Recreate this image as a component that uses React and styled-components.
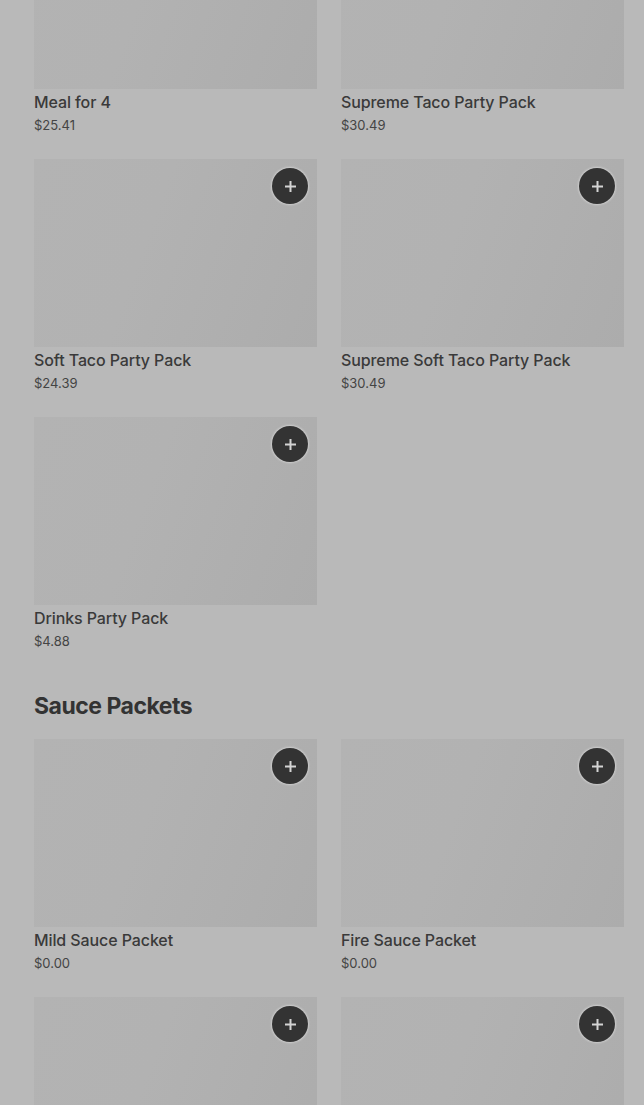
import styled, { createGlobalStyle } from "styled-components";

const GlobalStyle = createGlobalStyle`
    body {
        margin: 0;
        background: #b9b9b9;
        font-family: 'Inter', 'Liberation Sans', sans-serif;
        overflow: hidden;
    }
`;

const sections = [
    {
        title: null,
        items: [
            { name: "Meal for 4", price: "$25.41" },
            { name: "Supreme Taco Party Pack", price: "$30.49" },
            { name: "Soft Taco Party Pack", price: "$24.39" },
            { name: "Supreme Soft Taco Party Pack", price: "$30.49" },
            { name: "Drinks Party Pack", price: "$4.88" },
        ],
    },
    {
        title: "Sauce Packets",
        items: [
            { name: "Mild Sauce Packet", price: "$0.00" },
            { name: "Fire Sauce Packet", price: "$0.00" },
            { name: "Hot Sauce Packet", price: "$0.00" },
            { name: "Diablo Sauce Packet", price: "$0.00" },
        ],
    },
];

function PlusIcon() {
    return (
        <svg width="13" height="13" viewBox="0 0 13 13">
            <path d="M6.5 1v11M1 6.5h11" stroke="#d4d4d4" strokeWidth="2" />
        </svg>
    );
}

function ItemCard({ name, price }) {
    return (
        <Card>
            <Thumb>
                <AddButton aria-label="Add">
                    <PlusIcon />
                </AddButton>
            </Thumb>
            <ItemName>{name}</ItemName>
            <ItemPrice>{price}</ItemPrice>
        </Card>
    );
}

export default function App() {
    return (
        <>
            <GlobalStyle />
            <Page>
                {sections.map((section, index) => (
                    <Section key={index}>
                        {section.title && <SectionTitle>{section.title}</SectionTitle>}
                        <Grid>
                            {section.items.map((item) => (
                                <ItemCard key={item.name} name={item.name} price={item.price} />
                            ))}
                        </Grid>
                    </Section>
                ))}
            </Page>
        </>
    );
}

const Page = styled.div`
    margin-top: -99px;
    padding: 0 20px 40px 34px;
    display: flex;
    flex-direction: column;
    gap: 39px;
`;

const Section = styled.section`
    display: flex;
    flex-direction: column;
    gap: 17px;
`;

const SectionTitle = styled.h2`
    margin: 0;
    font-size: 23px;
    line-height: 32px;
    font-weight: 700;
    letter-spacing: -0.5px;
    color: #333333;
`;

const Grid = styled.div`
    display: grid;
    grid-template-columns: 283px 283px;
    column-gap: 24px;
    row-gap: 24px;
`;

const Card = styled.div`
    display: flex;
    flex-direction: column;
`;

const Thumb = styled.div`
    position: relative;
    height: 188px;
    background: linear-gradient(110deg, #b3b3b3 0%, #b2b2b2 40%, #acacac 100%);
`;

const AddButton = styled.button`
    position: absolute;
    top: 9px;
    right: 9px;
    width: 36px;
    height: 36px;
    padding: 0;
    border: none;
    border-radius: 50%;
    background: #333333;
    box-shadow: 0 0 2px 1px rgba(220, 220, 220, 0.7);
    display: flex;
    align-items: center;
    justify-content: center;
`;

const ItemName = styled.div`
    margin-top: 3px;
    font-size: 16px;
    line-height: 20px;
    font-weight: 500;
    letter-spacing: -0.1px;
    color: #3a3a3a;
`;

const ItemPrice = styled.div`
    margin-top: 3px;
    font-size: 13px;
    line-height: 20px;
    color: #444444;
`;
